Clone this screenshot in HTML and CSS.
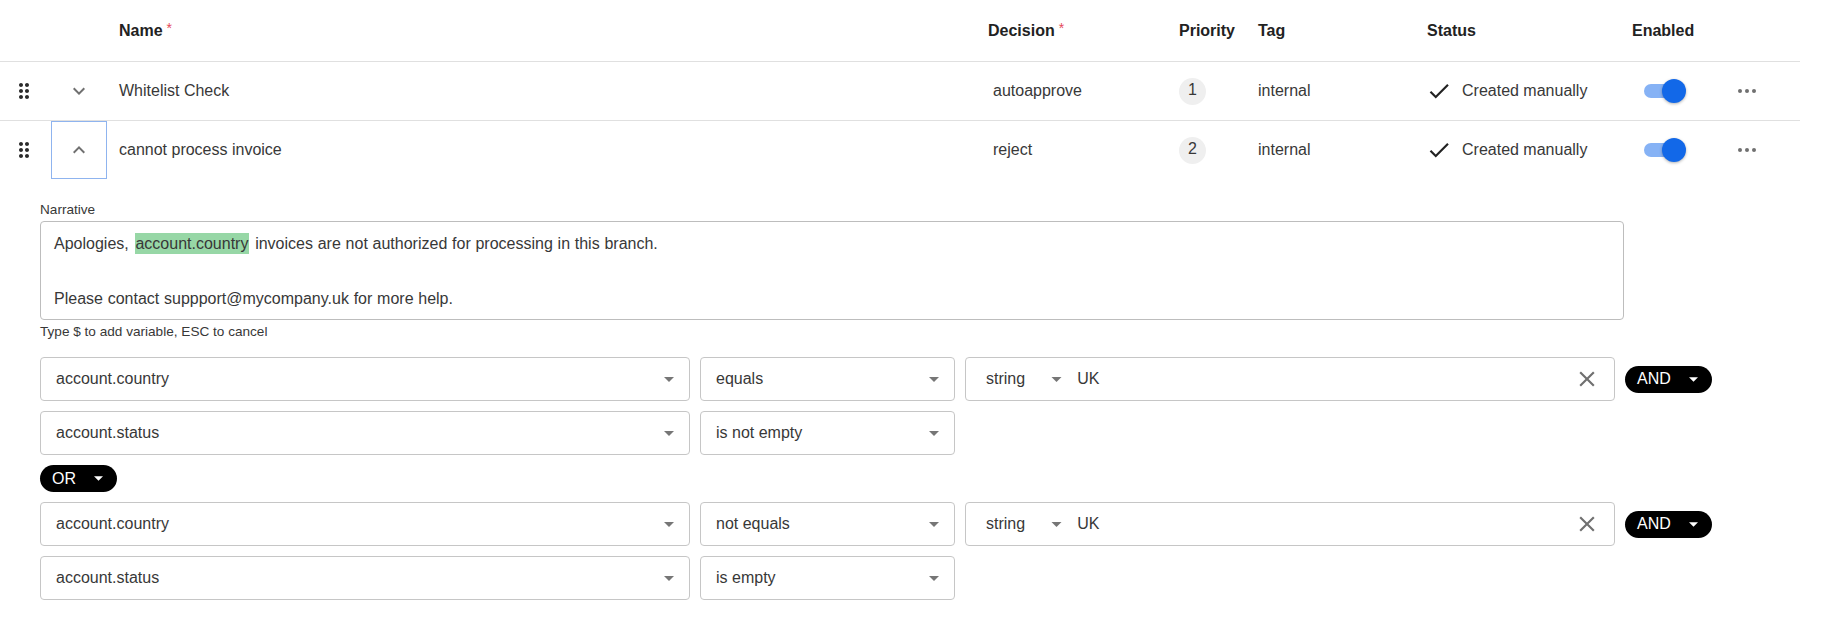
FILE: index.html
```html
<!DOCTYPE html>
<html lang="en">
<head>
<meta charset="utf-8">
<title>Rules</title>
<link rel="stylesheet" href="styles.css">
</head>
<body>
<div class="rules">
  <div class="grid head">
    <div></div>
    <div></div>
    <div class="col-name">Name<span class="req">*</span></div>
    <div>Decision<span class="req">*</span></div>
    <div>Priority</div>
    <div>Tag</div>
    <div>Status</div>
    <div>Enabled</div>
    <div></div>
  </div>

  <div class="grid row">
    <div class="handle">
      <svg viewBox="0 0 24 24" width="24" height="24"><path d="M11 18c0 1.1-.9 2-2 2s-2-.9-2-2 .9-2 2-2 2 .9 2 2zm-2-8c-1.1 0-2 .9-2 2s.9 2 2 2 2-.9 2-2-.9-2-2-2zm0-6c-1.1 0-2 .9-2 2s.9 2 2 2 2-.9 2-2-.9-2-2-2zm6 4c1.1 0 2-.9 2-2s-.9-2-2-2-2 .9-2 2 .9 2 2 2zm0 2c-1.1 0-2 .9-2 2s.9 2 2 2 2-.9 2-2-.9-2-2-2zm0 6c-1.1 0-2 .9-2 2s.9 2 2 2 2-.9 2-2-.9-2-2-2z"/></svg>
    </div>
    <div class="expand">
      <svg viewBox="0 0 24 24" width="24" height="24"><path d="M16.59 8.59 12 13.17 7.41 8.59 6 10l6 6 6-6z"/></svg>
    </div>
    <div class="col-name">Whitelist Check</div>
    <div class="col-decision">autoapprove</div>
    <div><span class="badge">1</span></div>
    <div>internal</div>
    <div class="status">
      <svg viewBox="0 0 24 24" width="26" height="26"><path d="M9 16.17 4.83 12l-1.42 1.41L9 19 21 7l-1.41-1.41z"/></svg>
      <span>Created manually</span>
    </div>
    <div><span class="switch"><span class="track"></span><span class="thumb"></span></span></div>
    <div class="more"><i></i><i></i><i></i></div>
  </div>

  <div class="grid row open">
    <div class="handle">
      <svg viewBox="0 0 24 24" width="24" height="24"><path d="M11 18c0 1.1-.9 2-2 2s-2-.9-2-2 .9-2 2-2 2 .9 2 2zm-2-8c-1.1 0-2 .9-2 2s.9 2 2 2 2-.9 2-2-.9-2-2-2zm0-6c-1.1 0-2 .9-2 2s.9 2 2 2 2-.9 2-2-.9-2-2-2zm6 4c1.1 0 2-.9 2-2s-.9-2-2-2-2 .9-2 2 .9 2 2 2zm0 2c-1.1 0-2 .9-2 2s.9 2 2 2 2-.9 2-2-.9-2-2-2zm0 6c-1.1 0-2 .9-2 2s.9 2 2 2 2-.9 2-2-.9-2-2-2z"/></svg>
    </div>
    <div class="expand focused">
      <svg viewBox="0 0 24 24" width="24" height="24"><path d="M12 8l-6 6 1.41 1.41L12 10.83l4.59 4.58L18 14z"/></svg>
    </div>
    <div class="col-name">cannot process invoice</div>
    <div class="col-decision">reject</div>
    <div><span class="badge">2</span></div>
    <div>internal</div>
    <div class="status">
      <svg viewBox="0 0 24 24" width="26" height="26"><path d="M9 16.17 4.83 12l-1.42 1.41L9 19 21 7l-1.41-1.41z"/></svg>
      <span>Created manually</span>
    </div>
    <div><span class="switch"><span class="track"></span><span class="thumb"></span></span></div>
    <div class="more"><i></i><i></i><i></i></div>
  </div>

  <div class="details">
    <div class="label">Narrative</div>
    <div class="narrative">
      <div>Apologies, <span class="var">account.country</span> invoices are not authorized for processing in this branch.</div>
      <div>&nbsp;</div>
      <div>Please contact suppport@mycompany.uk for more help.</div>
    </div>
    <div class="hint">Type $ to add variable, ESC to cancel</div>

    <div class="conditions">
      <div class="cond">
        <div class="field wide"><span>account.country</span><svg class="caret" viewBox="0 0 10 5" width="10" height="5"><polygon points="0,0 10,0 5,5"/></svg></div>
        <div class="field op"><span>equals</span><svg class="caret" viewBox="0 0 10 5" width="10" height="5"><polygon points="0,0 10,0 5,5"/></svg></div>
        <div class="field value">
          <span class="type">string</span>
          <svg class="caret small" viewBox="0 0 10 5" width="11" height="5"><polygon points="0,0 10,0 5,5"/></svg>
          <span class="val">UK</span>
          <svg class="clear" viewBox="0 0 24 24" width="26" height="26"><path d="M19 6.41 17.59 5 12 10.59 6.41 5 5 6.41 10.59 12 5 17.59 6.41 19 12 13.41 17.59 19 19 17.59 13.41 12z"/></svg>
        </div>
        <div class="pill">AND<svg viewBox="0 0 10 5" width="9" height="5"><polygon points="0,0 10,0 5,5"/></svg></div>
      </div>
      <div class="cond">
        <div class="field wide"><span>account.status</span><svg class="caret" viewBox="0 0 10 5" width="10" height="5"><polygon points="0,0 10,0 5,5"/></svg></div>
        <div class="field op"><span>is not empty</span><svg class="caret" viewBox="0 0 10 5" width="10" height="5"><polygon points="0,0 10,0 5,5"/></svg></div>
      </div>
      <div class="cond">
        <div class="pill">OR<svg viewBox="0 0 10 5" width="9" height="5"><polygon points="0,0 10,0 5,5"/></svg></div>
      </div>
      <div class="cond">
        <div class="field wide"><span>account.country</span><svg class="caret" viewBox="0 0 10 5" width="10" height="5"><polygon points="0,0 10,0 5,5"/></svg></div>
        <div class="field op"><span>not equals</span><svg class="caret" viewBox="0 0 10 5" width="10" height="5"><polygon points="0,0 10,0 5,5"/></svg></div>
        <div class="field value">
          <span class="type">string</span>
          <svg class="caret small" viewBox="0 0 10 5" width="11" height="5"><polygon points="0,0 10,0 5,5"/></svg>
          <span class="val">UK</span>
          <svg class="clear" viewBox="0 0 24 24" width="26" height="26"><path d="M19 6.41 17.59 5 12 10.59 6.41 5 5 6.41 10.59 12 5 17.59 6.41 19 12 13.41 17.59 19 19 17.59 13.41 12z"/></svg>
        </div>
        <div class="pill">AND<svg viewBox="0 0 10 5" width="9" height="5"><polygon points="0,0 10,0 5,5"/></svg></div>
      </div>
      <div class="cond">
        <div class="field wide"><span>account.status</span><svg class="caret" viewBox="0 0 10 5" width="10" height="5"><polygon points="0,0 10,0 5,5"/></svg></div>
        <div class="field op"><span>is empty</span><svg class="caret" viewBox="0 0 10 5" width="10" height="5"><polygon points="0,0 10,0 5,5"/></svg></div>
      </div>
    </div>
  </div>
</div>
</body>
</html>
```

FILE: styles.css
```css
* {
  box-sizing: border-box;
}

body {
  margin: 0;
  background: #fff;
  font-family: "Liberation Sans", Arial, sans-serif;
  font-size: 16px;
  color: #383838;
}

.rules {
  width: 1800px;
}

/* table rows share one column template */
.grid {
  display: grid;
  grid-template-columns: 51px 56px 881px 191px 79px 169px 205px 98px 70px;
  align-items: center;
}

.head {
  height: 62px;
  border-bottom: 1px solid #e0e0e0;
  font-weight: bold;
  color: #222;
}

.req {
  color: #e5495a;
  font-weight: normal;
  font-size: 14px;
  margin-left: 4px;
  position: relative;
  top: -3px;
}

.row {
  height: 59px;
  border-bottom: 1px solid #e0e0e0;
}

.row.open {
  height: 58px;
  border-bottom: none;
}

.col-name {
  padding-left: 12px;
}

.col-decision {
  padding-left: 5px;
}

.handle {
  display: flex;
  padding-left: 12px;
}

.handle svg {
  fill: #2b2b2b;
}

.expand {
  height: 100%;
  display: flex;
  align-items: center;
  justify-content: center;
}

.expand svg {
  fill: #707070;
}

.expand.focused {
  border: 1px solid #8fb4ef;
}

.badge {
  display: inline-flex;
  width: 27px;
  height: 27px;
  border-radius: 50%;
  background: #efefef;
  align-items: center;
  justify-content: center;
  padding-bottom: 2px;
}

.status {
  display: flex;
  align-items: center;
  gap: 10px;
  margin-left: -1px;
}

.status svg {
  fill: #222;
}

.switch {
  display: inline-block;
  position: relative;
  width: 42px;
  height: 24px;
  margin-left: 12px;
  vertical-align: middle;
}

.switch .track {
  position: absolute;
  left: 0;
  top: 5px;
  width: 38px;
  height: 14px;
  border-radius: 7px;
  background: #86b2f5;
}

.switch .thumb {
  position: absolute;
  right: 0;
  top: 0;
  width: 24px;
  height: 24px;
  border-radius: 50%;
  background: #1268e8;
  box-shadow: 0 1px 3px rgba(0, 0, 0, 0.3);
}

.more {
  display: flex;
  gap: 3px;
  padding-left: 8px;
}

.more i {
  width: 4px;
  height: 4px;
  border-radius: 50%;
  background: #707070;
}

/* expanded rule editor */
.details {
  padding: 23px 0 0 40px;
}

.label {
  font-size: 13.6px;
  line-height: 16px;
  margin-bottom: 3px;
}

.narrative {
  width: 1584px;
  height: 99px;
  border: 1px solid #bdbdbd;
  border-radius: 4px;
  padding: 8px 13px;
  line-height: 27.5px;
  word-spacing: 0.3px;
}

.var {
  background: #97d7a6;
  padding: 2px 1px 2px 0;
  margin: 0 1px 0 2px;
}

.hint {
  font-size: 13.6px;
  line-height: 16px;
  margin-top: 4px;
}

.conditions {
  margin-top: 17px;
  display: flex;
  flex-direction: column;
  gap: 10px;
}

.cond {
  display: flex;
  align-items: center;
  gap: 10px;
}

.field {
  height: 44px;
  border: 1px solid #c6c6c6;
  border-radius: 4px;
  padding: 0 15px;
  display: flex;
  align-items: center;
  justify-content: space-between;
}

.field.wide {
  width: 650px;
}

.field.op {
  width: 255px;
}

.field.value {
  width: 650px;
  justify-content: flex-start;
  padding: 0 14px 0 20px;
}

.caret {
  fill: #767676;
}

.caret.small {
  margin-left: 26px;
}

.val {
  margin-left: 15px;
  flex: 1;
}

.clear {
  fill: #707070;
}

.pill {
  height: 27px;
  border-radius: 14px;
  background: #000;
  color: #fff;
  display: inline-flex;
  align-items: center;
  padding: 0 14px 0 12px;
  gap: 18px;
}

.pill svg {
  fill: #fff;
}
```
